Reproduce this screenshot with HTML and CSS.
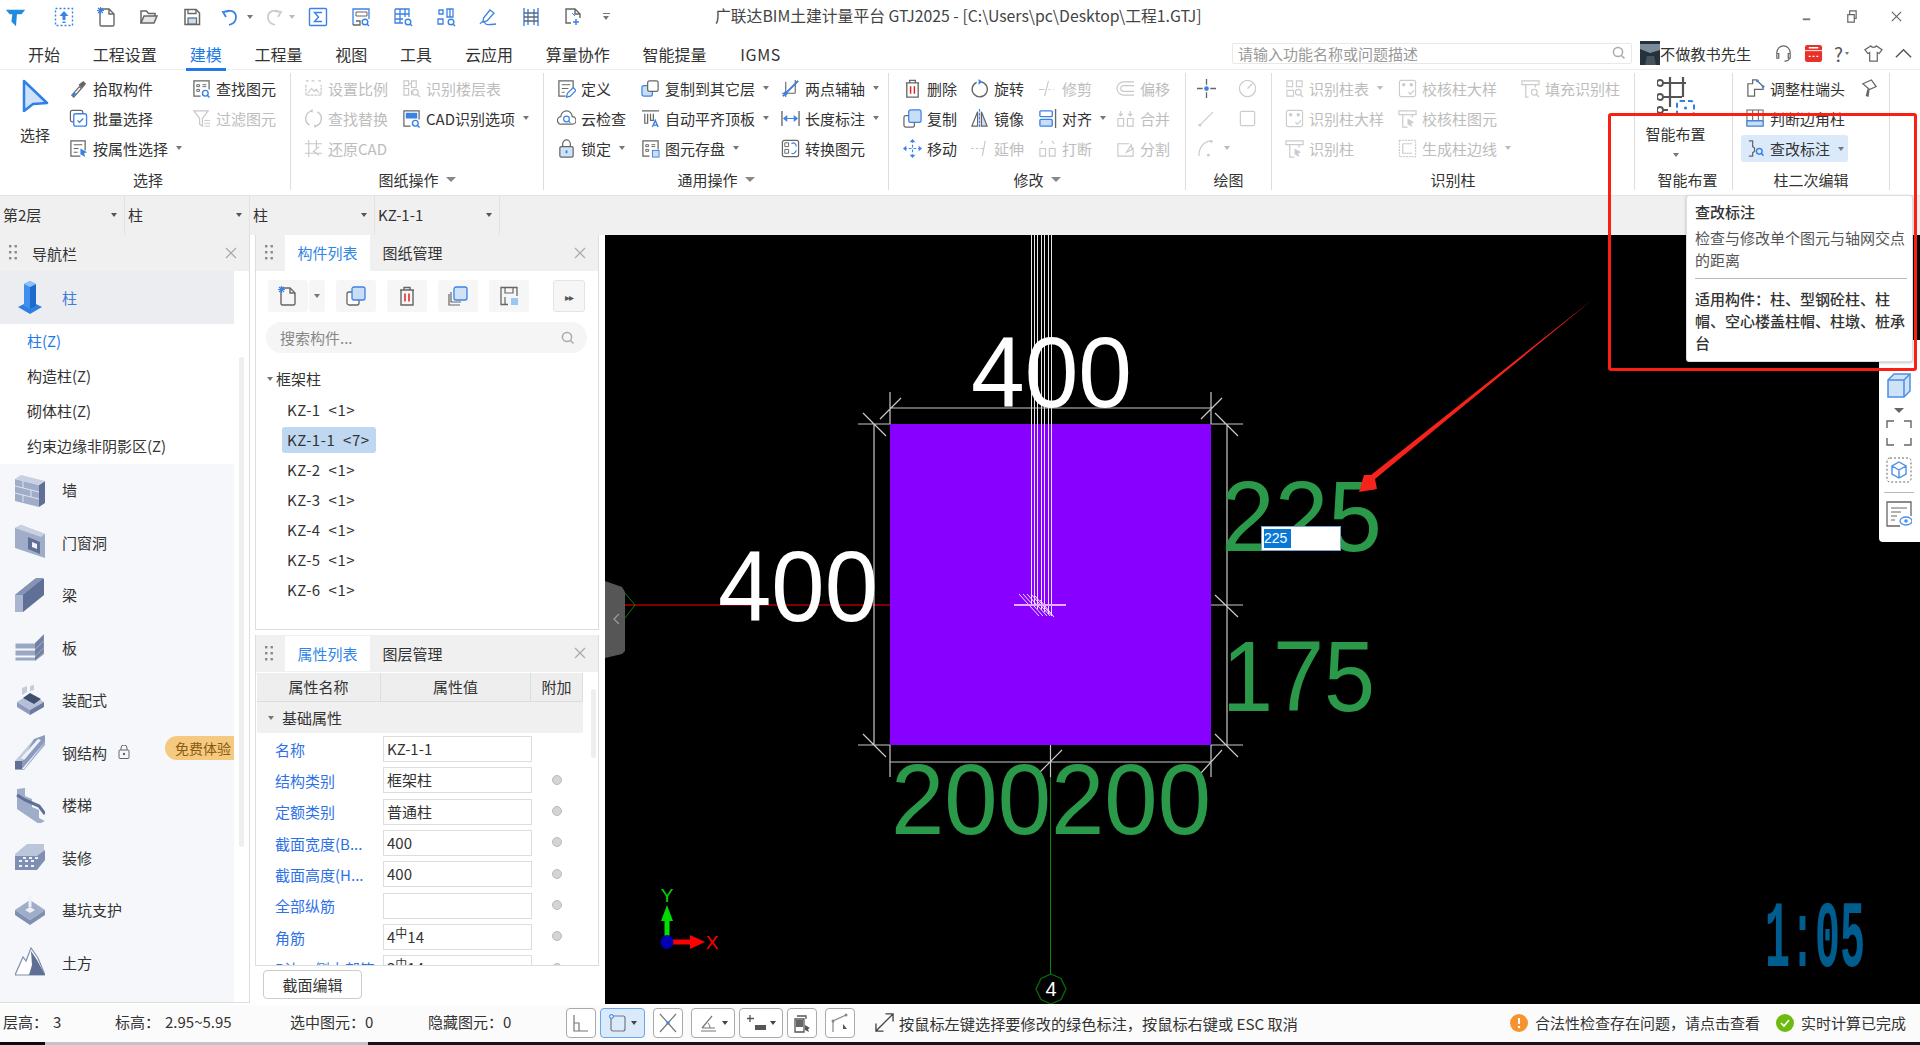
FILE: index.html
```html
<!DOCTYPE html>
<html lang="zh-CN">
<head>
<meta charset="utf-8">
<title>广联达BIM土建计量平台 GTJ2025</title>
<link rel="stylesheet" href="styles.css">
</head>
<body>
<svg class="defs" width="0" height="0" aria-hidden="true">
<defs>
<symbol id="grip" viewBox="0 0 8 16"><g fill="#888"><rect x="0" y="0" width="2.4" height="2.4"/><rect x="5.5" y="0" width="2.4" height="2.4"/><rect x="0" y="6" width="2.4" height="2.4"/><rect x="5.5" y="6" width="2.4" height="2.4"/><rect x="0" y="12" width="2.4" height="2.4"/><rect x="5.5" y="12" width="2.4" height="2.4"/></g></symbol>
<symbol id="x" viewBox="0 0 12 12"><path d="M1 1l10 10M11 1L1 11" stroke="#aaa" stroke-width="1.3" fill="none"/></symbol>
<symbol id="mag" viewBox="0 0 14 14"><circle cx="6" cy="6" r="4.6" fill="none" stroke="#aaa" stroke-width="1.5"/><path d="M9.5 9.5l3 3" stroke="#aaa" stroke-width="1.5"/></symbol>
<symbol id="newdoc" viewBox="0 0 20 20"><path d="M3 2h9l5 5v10.500a1.500 1.500 0 0 1-1.500 1.500h-11A1.500 1.500 0 0 1 3 17.500z" fill="none" stroke="var(--s)" stroke-width="1.400"/><path d="M12 2v5h5" fill="none" stroke="var(--s)" stroke-width="1.400"/><path d="M1 1l5 5M6 1L1 6M3.500 0v7M0 3.500h7" stroke="var(--a)" stroke-width="1.100"/></symbol>
<symbol id="upload" viewBox="0 0 20 20"><rect x="1.500" y="1.500" width="17" height="17" fill="none" stroke="var(--a)" stroke-width="1.400" stroke-dasharray="2 2"/><path d="M10 4l4.500 5h-3v4h-3V9h-3z" fill="var(--a)"/><rect x="8.500" y="14.500" width="3" height="1.500" fill="var(--a)"/></symbol>
<symbol id="folder" viewBox="0 0 20 20"><path d="M2 16V4h5.500l2 2.500H16V9" fill="none" stroke="var(--s)" stroke-width="1.500"/><path d="M2 16l3-7h13l-3 7z" fill="#e4e6ea" stroke="var(--s)" stroke-width="1.500"/></symbol>
<symbol id="save" viewBox="0 0 20 20"><path d="M3 2.500h11l3.500 3.500v11.500H3z" fill="none" stroke="var(--s)" stroke-width="1.500"/><path d="M6 3v3.500h8V3" fill="none" stroke="var(--s)" stroke-width="1.300"/><rect x="6" y="11" width="8.500" height="6" fill="#c9def6" stroke="var(--s)" stroke-width="1.200"/></symbol>
<symbol id="undo" viewBox="0 0 20 20"><path d="M5 10l-3-5 6-1M3 5c5-3 12-1 12 5 0 4-3 7-7 8" fill="none" stroke="var(--a)" stroke-width="1.800"/></symbol>
<symbol id="redo" viewBox="0 0 20 20"><path d="M15 10l3-5-6-1M17 5C12 2 5 4 5 10c0 4 3 7 7 8" fill="none" stroke="#ccc" stroke-width="1.800"/></symbol>
<symbol id="sigma" viewBox="0 0 20 20"><rect x="1.500" y="1.500" width="17" height="17" rx="1" fill="none" stroke="var(--a)" stroke-width="1.400"/><path d="M14 5.500H6.500L10.500 10l-4 4.500H14" fill="none" stroke="var(--a)" stroke-width="1.400"/></symbol>
<symbol id="q1" viewBox="0 0 20 20"><path d="M2 18V2h16v10" fill="none" stroke="var(--a)" stroke-width="1.300"/><path d="M5 5h11v4H5z" fill="none" stroke="var(--s)"/><path d="M2 18h7v-4H5" fill="none" stroke="var(--s)" stroke-width="1.300"/><circle cx="14" cy="15" r="2.800" fill="none" stroke="var(--a)" stroke-width="1.400"/><path d="M16 17l2 2" stroke="var(--a)" stroke-width="1.400"/></symbol>
<symbol id="q2" viewBox="0 0 20 20"><path d="M2 2h14v8M2 2v14h8M2 7h14M2 12h8M7 2v14M12 2v8" fill="none" stroke="var(--a)" stroke-width="1.300"/><circle cx="15" cy="15" r="2.800" fill="none" stroke="var(--a)" stroke-width="1.400"/><path d="M17 17l2 2" stroke="var(--a)" stroke-width="1.400"/></symbol>
<symbol id="q3" viewBox="0 0 20 20"><path d="M3 7V3h4v4zM11 10V2h6v8zM2 17v-5h5v5zM11 2h6M14 2v8" fill="none" stroke="var(--a)" stroke-width="1.300"/><circle cx="15" cy="15" r="2.800" fill="none" stroke="var(--a)" stroke-width="1.400"/><path d="M17 17l2 2" stroke="var(--a)" stroke-width="1.400"/></symbol>
<symbol id="q4" viewBox="0 0 20 20"><path d="M12 3l4 3-7 8-4 1 .5-4z" fill="none" stroke="var(--a)" stroke-width="1.300"/><path d="M2 17c2-3 4-3 5-1s3 2 11 1" fill="none" stroke="var(--a)" stroke-width="1.300"/></symbol>
<symbol id="q5" viewBox="0 0 20 20"><path d="M3 1v18M17 1v18M7 2v16M13 2v16" stroke="var(--a)" stroke-width="1.400" fill="none"/><path d="M3 6h14M3 14h14M3 10h14" stroke="var(--s)" stroke-width="1.300" fill="none"/></symbol>
<symbol id="q6" viewBox="0 0 20 20"><path d="M8 16H3V2h9l5 5v4M12 2v5h5" fill="none" stroke="var(--s)" stroke-width="1.400"/><path d="M5 18h0M13 12v6M10 15h6" stroke="var(--a)" stroke-width="1.500"/><path d="M9 6l3 3" stroke="var(--a)"/></symbol>
<symbol id="pick" viewBox="0 0 20 20"><path d="M3 17l8-9 2 2-8 9z" fill="#fff" stroke="var(--s)" stroke-width="1.300"/><path d="M3 17l3-3 1.500 1.500L5 19z" fill="var(--a)"/><path d="M10 6l5-4 3 3-4 5z" fill="var(--s)"/></symbol>
<symbol id="batch" viewBox="0 0 20 20"><rect x="1.500" y="1.500" width="13" height="12" rx="2" fill="none" stroke="var(--s)" stroke-width="1.300"/><rect x="5" y="5" width="13.500" height="13" rx="2" fill="#fff" stroke="var(--a)" stroke-width="1.400"/><path d="M9 12l2 2 4-4" fill="none" stroke="var(--a)" stroke-width="1.300"/></symbol>
<symbol id="prop" viewBox="0 0 20 20"><path d="M12 18H2V2h15v10" fill="none" stroke="var(--s)" stroke-width="1.300"/><path d="M5 6h9M5 10h5M5 14h4" stroke="var(--s)" stroke-width="1.200"/><path d="M12 10l7 4-3 1 1 4-5-3z" fill="var(--a)"/></symbol>
<symbol id="find" viewBox="0 0 20 20"><path d="M9 18H2V2h16v9" fill="none" stroke="var(--s)" stroke-width="1.300"/><path d="M5 6h3v2H5zM5 11h3v2H5zM11 6h4M11 8h4" stroke="var(--s)" fill="none"/><circle cx="14" cy="15" r="3" fill="none" stroke="var(--a)" stroke-width="1.500"/><path d="M16 17l2.500 2.500" stroke="var(--a)" stroke-width="1.500"/></symbol>
<symbol id="filter" viewBox="0 0 20 20"><path d="M2 2h15l-6 8v8l-3-2v-6z" fill="none" stroke="var(--s)" stroke-width="1.300"/><path d="M13 12h6M13 15h6M13 18h6" stroke="var(--s)"/></symbol>
<symbol id="scale" viewBox="0 0 20 20"><path d="M2 6v11h16V6M2 2h3M8 2h4M15 2h3" fill="none" stroke="var(--s)" stroke-width="1.300" stroke-dasharray="3 1"/><path d="M4 15l4-5 3 3 2-2 3 4" fill="none" stroke="var(--s)" stroke-width="1.200"/></symbol>
<symbol id="floor" viewBox="0 0 20 20"><path d="M2 2h5v5H2zM10 2h5v7h-5zM2 10h5v7H2zM10 12v5M2 7v3M7 5h3" fill="none" stroke="var(--s)" stroke-width="1.200"/><circle cx="14" cy="14" r="3" fill="none" stroke="var(--s)" stroke-width="1.300"/><path d="M16 16l3 3" stroke="var(--s)" stroke-width="1.300"/></symbol>
<symbol id="swap" viewBox="0 0 20 20"><path d="M9 2a8 8 0 0 0-3 15M11 18a8 8 0 0 0 3-15" fill="none" stroke="var(--s)" stroke-width="1.500"/><path d="M9 0v4l-3-2zM11 16v4l3-2z" fill="var(--s)"/></symbol>
<symbol id="cadq" viewBox="0 0 20 20"><path d="M9 18H2V2h16v9" fill="none" stroke="var(--s)" stroke-width="1.300"/><rect x="4" y="4" width="12" height="6" fill="var(--a)"/><circle cx="14" cy="15" r="3" fill="none" stroke="var(--a)" stroke-width="1.500"/><path d="M16 17l2.500 2.500" stroke="var(--a)" stroke-width="1.500"/></symbol>
<symbol id="restore" viewBox="0 0 20 20"><path d="M5 1v18M13 1v9M1 5h18M1 15h18" stroke="var(--s)" stroke-width="1.200" fill="none"/><path d="M16 8l-6 5 6 4" fill="none" stroke="var(--s)" stroke-width="1.300"/></symbol>
<symbol id="def" viewBox="0 0 20 20"><path d="M9 18H2V2h15v8" fill="none" stroke="var(--s)" stroke-width="1.300"/><path d="M5 6h9M5 10h7M5 14h3" stroke="var(--s)"/><path d="M10 19l1-4 6-6 3 3-6 6z" fill="none" stroke="var(--a)" stroke-width="1.300"/></symbol>
<symbol id="cloud" viewBox="0 0 20 20"><path d="M5 16a4 4 0 0 1-1-8 6 6 0 0 1 12 0 4 4 0 0 1 0 8z" fill="none" stroke="var(--s)" stroke-width="1.300"/><circle cx="10" cy="10.500" r="3" fill="none" stroke="var(--a)" stroke-width="1.300"/><path d="M12 12.500l2 2" stroke="var(--a)" stroke-width="1.300"/></symbol>
<symbol id="lock" viewBox="0 0 20 20"><rect x="3" y="8" width="14" height="11" rx="1.500" fill="#cfe2f8" stroke="var(--s)" stroke-width="1.300"/><path d="M6 8V5a4 4 0 0 1 8 0v3" fill="none" stroke="var(--s)" stroke-width="1.300"/><path d="M10 12v3" stroke="var(--a)" stroke-width="2"/></symbol>
<symbol id="copyto" viewBox="0 0 20 20"><rect x="1" y="7" width="11" height="11" rx="2" fill="#c9def6" stroke="var(--a)" stroke-width="1.300"/><rect x="7" y="2" width="11" height="11" rx="2" fill="#fff" stroke="var(--s)" stroke-width="1.300"/></symbol>
<symbol id="autotop" viewBox="0 0 20 20"><path d="M1 2h18M4 5v10h3V5M10 5v7h3V5" fill="none" stroke="var(--s)" stroke-width="1.300"/><path d="M12 19l3-7 3 7M13 17h4" fill="none" stroke="var(--a)" stroke-width="1.500"/></symbol>
<symbol id="store" viewBox="0 0 20 20"><path d="M9 18H2V2h16v9" fill="none" stroke="var(--s)" stroke-width="1.300"/><path d="M5 6h3v2H5zM5 11h3v2H5zM11 6h4M11 8h4" stroke="var(--s)" fill="none"/><rect x="12" y="12" width="7" height="7" fill="#c9def6" stroke="var(--a)"/></symbol>
<symbol id="twopt" viewBox="0 0 20 20"><path d="M5 3v16M1 15h14M15 1v14M2 18L18 2" fill="none" stroke="var(--s)" stroke-width="1.200"/><path d="M2 18L18 2" stroke="var(--a)" stroke-width="2"/><circle cx="5" cy="15" r="2" fill="var(--a)"/></symbol>
<symbol id="length" viewBox="0 0 20 20"><path d="M1 2v16M19 2v16" stroke="var(--s)" stroke-width="1.400"/><path d="M3 10h14M3 10l3-2.500v5zM17 10l-3-2.500v5z" stroke="var(--a)" fill="var(--a)" stroke-width="1.200"/></symbol>
<symbol id="convert" viewBox="0 0 20 20"><rect x="1.500" y="1.500" width="17" height="17" rx="2" fill="none" stroke="var(--s)" stroke-width="1.300"/><path d="M4 4h4v4H4zM4 11h4v4H4z" fill="none" stroke="var(--s)"/><path d="M11 5c3-2 5 0 5 3M16 12c-1 3-3 4-5 3" fill="none" stroke="var(--a)" stroke-width="1.300"/></symbol>
<symbol id="del" viewBox="0 0 20 20"><path d="M3 4h14M7 4V1.500h6V4M4 4v15h12V4" fill="none" stroke="var(--s)" stroke-width="1.400"/><path d="M8 7.500v8M12 7.500v8" stroke="#e02020" stroke-width="1.500"/></symbol>
<symbol id="rotate" viewBox="0 0 20 20"><path d="M12 3a8 8 0 1 1-5 .5" fill="none" stroke="var(--s)" stroke-width="1.500"/><path d="M9 0l4 3-4 3z" fill="var(--a)"/></symbol>
<symbol id="trim" viewBox="0 0 20 20"><path d="M1 11h6M11 11h2M16 11h1M11 2L7 18" stroke="var(--s)" stroke-width="1.200" fill="none"/></symbol>
<symbol id="offset" viewBox="0 0 20 20"><path d="M19 3H8a7 7 0 0 0 0 14h11M19 7H8a3 3 0 0 0 0 6h11" fill="none" stroke="var(--s)" stroke-width="1.200"/></symbol>
<symbol id="copy" viewBox="0 0 20 20"><rect x="1" y="7" width="11" height="12" rx="2" fill="#fff" stroke="var(--s)" stroke-width="1.300"/><rect x="6" y="1" width="13" height="13" rx="2" fill="#c9def6" stroke="var(--a)" stroke-width="1.300"/></symbol>
<symbol id="mirror" viewBox="0 0 20 20"><path d="M8 3L2 18h6z" fill="none" stroke="var(--s)" stroke-width="1.300"/><path d="M12 3l6 15h-6z" fill="#c9def6" stroke="var(--s)" stroke-width="1.300"/><path d="M10 0v20" stroke="var(--a)" stroke-width="1.200" stroke-dasharray="3 1"/></symbol>
<symbol id="align" viewBox="0 0 20 20"><rect x="2" y="2" width="13" height="6" rx="1" fill="none" stroke="var(--a)" stroke-width="1.400"/><rect x="2" y="11" width="13" height="7" rx="1" fill="#c9def6" stroke="var(--a)" stroke-width="1.400"/><path d="M18.500 0v20" stroke="var(--s)" stroke-width="1.400"/></symbol>
<symbol id="merge" viewBox="0 0 20 20"><path d="M2 10h6v8H2zM12 10h6v8h-6zM5 2v4M3 5l2 2 2-2M15 2v4M13 5l2 2 2-2" fill="none" stroke="var(--s)" stroke-width="1.200"/></symbol>
<symbol id="move" viewBox="0 0 20 20"><path d="M10 1v18M1 10h18" stroke="var(--a)" stroke-width="1.200" stroke-dasharray="3 2"/><path d="M10 0l3 3.500H7zM10 20l3-3.500H7zM0 10l3.500-3v6zM20 10l-3.500-3v6z" fill="var(--a)"/></symbol>
<symbol id="extend" viewBox="0 0 20 20"><path d="M1 10h3M6 10h3M11 10h4M16 2l-3 16" stroke="var(--s)" stroke-width="1.200" fill="none"/></symbol>
<symbol id="break" viewBox="0 0 20 20"><path d="M2 10h6v8H2zM12 10h6v8h-6zM5 2l-2 3M15 2l2 3" fill="none" stroke="var(--s)" stroke-width="1.200"/></symbol>
<symbol id="split" viewBox="0 0 20 20"><path d="M14 5H2v13h16V9M11 14l5-8 1 5z" fill="none" stroke="var(--s)" stroke-width="1.200"/></symbol>
<symbol id="point" viewBox="0 0 20 20"><path d="M10 0v6M10 14v6M0 10h6M14 10h6" stroke="var(--s)" stroke-width="1.400"/><circle cx="10" cy="10" r="2.500" fill="var(--a)"/></symbol>
<symbol id="clock" viewBox="0 0 20 20"><circle cx="10" cy="10" r="8.500" fill="none" stroke="#ccc" stroke-width="1.300"/><path d="M10 10l5-5" stroke="#ccc" stroke-width="1.300"/></symbol>
<symbol id="line" viewBox="0 0 20 20"><path d="M3 17L17 3" stroke="#ccc" stroke-width="1.300"/><circle cx="3" cy="17" r="1.500" fill="#ccc"/></symbol>
<symbol id="rect" viewBox="0 0 20 20"><rect x="2.500" y="2.500" width="15" height="15" rx="1.500" fill="none" stroke="#ccc" stroke-width="1.300"/></symbol>
<symbol id="arc" viewBox="0 0 20 20"><path d="M2 18C2 9 7 3 14 2" fill="none" stroke="#ccc" stroke-width="1.300"/><circle cx="15" cy="2.500" r="1.500" fill="#ccc"/><circle cx="12" cy="17" r="1.500" fill="#ccc"/></symbol>
<symbol id="tbl" viewBox="0 0 20 20"><path d="M2 2h6v6H2zM12 2h6v6h-6zM2 12h7v6H2z" fill="none" stroke="#ccc" stroke-width="1.200"/><circle cx="14" cy="14" r="3" fill="none" stroke="#ccc" stroke-width="1.300"/><path d="M16 16l3 3" stroke="#ccc" stroke-width="1.300"/></symbol>
<symbol id="chk" viewBox="0 0 20 20"><rect x="1.500" y="1.500" width="17" height="17" rx="2" fill="none" stroke="#ccc" stroke-width="1.200"/><circle cx="6" cy="6" r="1.800" fill="#ccc"/><circle cx="14" cy="6" r="1.800" fill="#ccc"/><path d="M11 14l2 2 4-4" fill="none" stroke="#ccc" stroke-width="1.300"/></symbol>
<symbol id="fill" viewBox="0 0 20 20"><path d="M1 2h18v4H1zM5 6v13h3M15 6v3" fill="none" stroke="#ccc" stroke-width="1.300"/><circle cx="14" cy="14" r="3" fill="none" stroke="#ccc" stroke-width="1.300"/><path d="M16 16l3 3" stroke="#ccc" stroke-width="1.300"/></symbol>
<symbol id="cap" viewBox="0 0 20 20"><path d="M1 2h18v4H1zM5 6v13h5M15 6v3" fill="none" stroke="#ccc" stroke-width="1.300"/><path d="M10 10l7 4-3 1 1 4-5-3z" fill="#ccc"/></symbol>
<symbol id="gen" viewBox="0 0 20 20"><rect x="1.500" y="1.500" width="17" height="17" fill="none" stroke="#ccc" stroke-width="1.300" stroke-dasharray="2 1"/><path d="M5 5h10M5 5v10h10" fill="none" stroke="#ccc" stroke-width="1.300"/></symbol>
<symbol id="end" viewBox="0 0 20 20"><path d="M2 18V5h5V1h4l7 7v3H9v7z" fill="none" stroke="var(--s)" stroke-width="1.300"/><circle cx="12" cy="2" r="1.500" fill="var(--a)"/><circle cx="18" cy="8" r="1.500" fill="var(--a)"/></symbol>
<symbol id="brush" viewBox="0 0 20 20"><path d="M3 5l9-4 5 7-7 3z" fill="none" stroke="var(--s)" stroke-width="1.300"/><path d="M8 10l2 2-1 7-3-1z" fill="var(--s)"/></symbol>
<symbol id="corner" viewBox="0 0 20 20"><path d="M1 1h17v17H1zM1 6.500h17M1 12.500h17M7 1v17M13 1v17" fill="none" stroke="var(--s)" stroke-width="1.100"/><path d="M1 12.500h17V18H1z" fill="#c9def6" stroke="var(--a)" stroke-width="1.100"/></symbol>
<symbol id="mark" viewBox="0 0 20 20"><path d="M3 2h4v6l2 1.500V13l-2 1.500V18H3" fill="none" stroke="var(--s)" stroke-width="1.300"/><circle cx="14" cy="13" r="3" fill="none" stroke="var(--a)" stroke-width="1.500"/><path d="M16 15l2.500 2.500" stroke="var(--a)" stroke-width="1.500"/></symbol>
<symbol id="navcol" viewBox="0 0 30 36"><path d="M3 28l12-6 12 6-12 7z" fill="#2f7fe0"/><path d="M9 5l6-3 6 3v22l-6 3-6-3z" fill="#3f8ff0"/><path d="M15 8v22l6-3V5z" fill="#1f6ac8"/><path d="M9 5l6-3 6 3-6 3z" fill="#8fc0f8"/></symbol>
<symbol id="navwall" viewBox="0 0 30 36"><path d="M0 7l24 6v22L0 29z" fill="#a0adc8"/><path d="M24 13l6-4v22l-6 4z" fill="#5f6f95"/><path d="M0 7l6-4 24 6-6 4z" fill="#c8d0e2"/><path d="M0 14l24 6M0 21l24 6M8 9v7M16 18v7M8 23v7" stroke="#dde2ee" fill="none"/></symbol>
<symbol id="navdoor" viewBox="0 0 30 36"><path d="M0 4l6-3 24 9v24L0 24z" fill="#a0adc8"/><path d="M6 1l24 9-4 3L0 4z" fill="#c8d0e2"/><path d="M13 13l12 5v12l-12-5z" fill="#5f6f95"/><path d="M17 18l5 2v5l-5-2z" fill="#eef1f6"/></symbol>
<symbol id="navbeam" viewBox="0 0 30 36"><path d="M0 18L20 2h9v16L8 35H0z" fill="#5f6f95"/><path d="M0 18h8v17H0z" fill="#aab6cf"/><path d="M0 18L21 1h8L8 18z" fill="#8494b5"/></symbol>
<symbol id="navslab" viewBox="0 0 30 30"><path d="M0 11h20l9-9v6l-9 9H0zM0 18h20l9-9v6l-9 9H0zM0 25h20l9-9v4l-9 9H0z" fill="#9aa8c4" stroke="#f5f7fa"/><path d="M20 11l9-9v20l-9 7z" fill="#5f6f95" opacity=".7"/></symbol>
<symbol id="navpre" viewBox="0 0 30 30"><path d="M2 17l13-8 14 8-14 8z" fill="#b5c0d6"/><path d="M2 17v5l13 8v-5z" fill="#8c9bbd"/><path d="M15 25v5l14-8v-5z" fill="#6a7a9e"/><path d="M8 13l7-5 11 6-7 5z" fill="#404e70"/><path d="M7 10V3l5-2v6zM15 6V1l4-1v5z" fill="#c3cbdc"/></symbol>
<symbol id="navsteel" viewBox="0 0 30 36"><path d="M0 27L19 5h7L7 27z" fill="#c3cbdc"/><path d="M7 27v8H0v-8z" fill="#5f6f95"/><path d="M7 35L30 8V1L19 5 7 27z" fill="#8c9bbd"/><path d="M6 24L23 5l3 1-17 20z" fill="#eef1f6"/><path d="M0 35h9l21-27v3L9 36H0z" fill="#a0adc8"/></symbol>
<symbol id="navstair" viewBox="0 0 30 36"><path d="M2 2l8-1v8l7 3v8l7 3v8l6 3-6 3L2 22z" fill="#a0adc8"/><path d="M2 8l8 5 7 3 7 3 6 8" fill="none" stroke="#5f6f95" stroke-width="3"/></symbol>
<symbol id="navdeco" viewBox="0 0 30 30"><path d="M0 12L12 2h17v18H0z" fill="#bcc6da"/><path d="M0 14h22l8-6v10l-8 10H0z" fill="#7f8fb2"/><path d="M4 19h3M10 19h3M16 19h3M4 24h3M10 24h3M16 24h3M8 16h3M14 16h3M20 16h3" stroke="#eef1f6" stroke-width="2"/></symbol>
<symbol id="navpit" viewBox="0 0 30 30"><path d="M0 15L15 5l15 10-15 10z" fill="#a0adc8"/><path d="M0 15v5l15 10v-5zM30 15v5L15 30v-5z" fill="#7f8fb2"/><path d="M10 15l5-3 5 3-5 3z" fill="#eef1f6"/><path d="M15 1v11" stroke="#eef1f6" stroke-width="3"/></symbol>
<symbol id="navearth" viewBox="0 0 30 30"><path d="M0 28L8 10l3 4 5-13 7 10 7 17z" fill="#fff" stroke="#7f8fb2" stroke-width="1.200"/><path d="M16 4l6 9 8 15H14l3-10z" fill="#5f6f95"/></symbol>
<symbol id="tbcopy" viewBox="0 0 20 20"><rect x="1" y="6" width="12" height="13" rx="2" fill="#fff" stroke="#666" stroke-width="1.300"/><rect x="6" y="1" width="13" height="13" rx="2" fill="#c9def6" stroke="#3b82e6" stroke-width="1.300"/></symbol>
<symbol id="tbmulti" viewBox="0 0 20 20"><path d="M1 8v11h11M3 6v10h10" fill="none" stroke="#666" stroke-width="1.200"/><rect x="6" y="1" width="13" height="13" rx="2" fill="#cfe2f8" stroke="#3b82e6" stroke-width="1.300"/></symbol>
<symbol id="tbsave" viewBox="0 0 20 20"><path d="M9 18.500H2v-17h16V10" fill="none" stroke="#666" stroke-width="1.300"/><path d="M6 2v5h8V2M6 18V11" fill="none" stroke="#666" stroke-width="1.200"/><rect x="12" y="12" width="7" height="7" fill="#9cc6f5"/></symbol>
<symbol id="st1" viewBox="0 0 20 20"><path d="M3 2v16h14M3 10h5v8" fill="none" stroke="#777" stroke-width="1.200"/></symbol>
<symbol id="st2" viewBox="0 0 20 20"><rect x="3" y="3" width="14" height="15" rx="2" fill="none" stroke="#777" stroke-width="1.200"/><circle cx="3.500" cy="3.500" r="2" fill="#cfe2f8" stroke="#3b82e6"/></symbol>
<symbol id="st3" viewBox="0 0 20 20"><path d="M2 1l16 18M18 1L2 19" stroke="#777" stroke-width="1.200"/><rect x="8.500" y="8.500" width="3" height="3" fill="#3b82e6"/></symbol>
<symbol id="st4" viewBox="0 0 20 20"><path d="M3 15L13 3M3 15h13M2 18h15" stroke="#777" fill="none" stroke-width="1.200"/><path d="M9 10a7 7 0 0 1 2 5" stroke="#777" fill="none"/></symbol>
<symbol id="st5" viewBox="0 0 20 20"><path d="M3 2v7M0 5.500h7" stroke="#555" stroke-width="1.300"/><rect x="8" y="12" width="11" height="5" fill="#555"/></symbol>
<symbol id="st6" viewBox="0 0 20 20"><path d="M5 3h9v3M3 6h9v13H3z" fill="none" stroke="#555" stroke-width="1.300"/><rect x="4" y="7" width="7" height="7" fill="#666"/><path d="M13 12l5 3-2 1 1 3-4-2z" fill="#555"/></symbol>
<symbol id="st7" viewBox="0 0 20 20"><path d="M3 19V8l13-6" fill="none" stroke="#888" stroke-width="1.200"/><circle cx="3" cy="8" r="1.500" fill="#888"/><circle cx="16" cy="2" r="1.500" fill="#888"/><path d="M13 11l4 5h-4z" fill="#555"/></symbol>
</defs>
</svg>

<div class="app">
  <header class="titlebar">
    <div class="qat">
      <svg class="logo" viewBox="0 0 24 24"><path d="M1 4h21l-4 5h-5l-1 13-5-5 1-8H5z" fill="#1f8ae0"/></svg>
      <svg class="qi"><use href="#upload"/></svg>
      <svg class="qi"><use href="#newdoc"/></svg>
      <svg class="qi"><use href="#folder"/></svg>
      <svg class="qi"><use href="#save"/></svg>
      <span class="qsplit"><svg class="qi"><use href="#undo"/></svg><i class="car"></i></span>
      <span class="qsplit"><svg class="qi"><use href="#redo"/></svg><i class="car light"></i></span>
      <svg class="qi"><use href="#sigma"/></svg>
      <svg class="qi"><use href="#q1"/></svg>
      <svg class="qi"><use href="#q2"/></svg>
      <svg class="qi"><use href="#q3"/></svg>
      <svg class="qi"><use href="#q4"/></svg>
      <svg class="qi"><use href="#q5"/></svg>
      <svg class="qi"><use href="#q6"/></svg>
      <span class="qmore"><i class="bar"></i><i class="car"></i></span>
    </div>
    <div class="wintitle">广联达BIM土建计量平台 GTJ2025 - [C:\Users\pc\Desktop\工程1.GTJ]</div>
    <div class="winctl">
      <svg class="wc" viewBox="0 0 14 14"><rect x="3" y="9" width="8" height="2" fill="#777"/></svg>
      <svg class="wc" viewBox="0 0 14 14"><path d="M3 5h7v8H3zM5 5V1h7v8h-2" fill="none" stroke="#666" stroke-width="1.300"/></svg>
      <svg class="wc" viewBox="0 0 14 14"><path d="M2 2l10 10M12 2L2 12" stroke="#666" stroke-width="1.300"/></svg>
    </div>
  </header>

  <nav class="tabs">
    <span class="tab">开始</span><span class="tab">工程设置</span><span class="tab on">建模</span><span class="tab">工程量</span><span class="tab">视图</span><span class="tab">工具</span><span class="tab">云应用</span><span class="tab">算量协作</span><span class="tab">智能提量</span><span class="tab igms">IGMS</span>
    <div class="tabright">
      <div class="finder"><span>请输入功能名称或问题描述</span><svg class="mag"><use href="#mag"/></svg></div>
      <div class="user"><svg class="avatar" viewBox="0 0 20 24"><rect width="20" height="24" fill="#25323c"/><path d="M0 3h20v6L10 12 0 8z" fill="#7c8b99"/><path d="M5 24l2-9h7l2 9z" fill="#46525c"/></svg><span>不做教书先生</span></div>
      <svg class="ti" viewBox="0 0 20 20"><path d="M3 12V9a7 7 0 0 1 14 0v3M3 10h2v5H3zM15 10h2v5h-2zM16 15c0 2-2 3-5 3" fill="none" stroke="#666" stroke-width="1.300"/></svg>
      <svg class="ti red" viewBox="0 0 20 20"><rect x="1" y="1" width="18" height="18" rx="2.500" fill="#e8312a"/><path d="M1 7h18" stroke="#fff"/><path d="M5 4h10M5 13h2M9 13h2M13 13h2" stroke="#fff" stroke-width="1.500"/></svg>
      <span class="help">?<i class="car"></i></span>
      <svg class="ti" viewBox="0 0 20 20"><path d="M7 2L1 6l3 4 2-1v9h8V9l2 1 3-4-6-4c-1 2-5 2-6 0z" fill="none" stroke="#666" stroke-width="1.300"/></svg>
      <svg class="ti" viewBox="0 0 20 20"><path d="M2 14l8-8 8 8" fill="none" stroke="#555" stroke-width="1.500"/></svg>
    </div>
  </nav>

  <section class="ribbon">
    <div class="grp g1">
      <div class="cols">
        <div class="big bigsel"><svg class="bigarrow" viewBox="0 0 27 33"><path d="M2 2l23 22-14 1-9 7z" fill="#cfe2f8" stroke="#2f80ed" stroke-width="2.500" stroke-linejoin="round"/></svg><span>选择</span></div>
        <div class="col">
          <div class="ri"><svg class="ic"><use href="#pick"/></svg>拾取构件</div>
          <div class="ri"><svg class="ic"><use href="#batch"/></svg>批量选择</div>
          <div class="ri"><svg class="ic"><use href="#prop"/></svg>按属性选择<i class="car"></i></div>
        </div>
        <div class="col">
          <div class="ri"><svg class="ic"><use href="#find"/></svg>查找图元</div>
          <div class="ri off"><svg class="ic"><use href="#filter"/></svg>过滤图元</div>
        </div>
      </div>
      <div class="glabel">选择</div>
    </div>
    <div class="grp g2">
      <div class="cols">
        <div class="col">
          <div class="ri off"><svg class="ic"><use href="#scale"/></svg>设置比例</div>
          <div class="ri off"><svg class="ic"><use href="#swap"/></svg>查找替换</div>
          <div class="ri off"><svg class="ic"><use href="#restore"/></svg>还原CAD</div>
        </div>
        <div class="col">
          <div class="ri off"><svg class="ic"><use href="#floor"/></svg>识别楼层表</div>
          <div class="ri"><svg class="ic"><use href="#cadq"/></svg>CAD识别选项<i class="car"></i></div>
        </div>
      </div>
      <div class="glabel">图纸操作<i class="car gc"></i></div>
    </div>
    <div class="grp g3">
      <div class="cols">
        <div class="col">
          <div class="ri"><svg class="ic"><use href="#def"/></svg>定义</div>
          <div class="ri"><svg class="ic"><use href="#cloud"/></svg>云检查</div>
          <div class="ri"><svg class="ic"><use href="#lock"/></svg>锁定<i class="car"></i></div>
        </div>
        <div class="col">
          <div class="ri"><svg class="ic"><use href="#copyto"/></svg>复制到其它层<i class="car"></i></div>
          <div class="ri"><svg class="ic"><use href="#autotop"/></svg>自动平齐顶板<i class="car"></i></div>
          <div class="ri"><svg class="ic"><use href="#store"/></svg>图元存盘<i class="car"></i></div>
        </div>
        <div class="col">
          <div class="ri"><svg class="ic"><use href="#twopt"/></svg>两点辅轴<i class="car"></i></div>
          <div class="ri"><svg class="ic"><use href="#length"/></svg>长度标注<i class="car"></i></div>
          <div class="ri"><svg class="ic"><use href="#convert"/></svg>转换图元</div>
        </div>
      </div>
      <div class="glabel">通用操作<i class="car gc"></i></div>
    </div>
    <div class="grp g4">
      <div class="cols">
        <div class="col">
          <div class="ri"><svg class="ic"><use href="#del"/></svg>删除</div>
          <div class="ri"><svg class="ic"><use href="#copy"/></svg>复制</div>
          <div class="ri"><svg class="ic"><use href="#move"/></svg>移动</div>
        </div>
        <div class="col">
          <div class="ri"><svg class="ic"><use href="#rotate"/></svg>旋转</div>
          <div class="ri"><svg class="ic"><use href="#mirror"/></svg>镜像</div>
          <div class="ri off"><svg class="ic"><use href="#extend"/></svg>延伸</div>
        </div>
        <div class="col">
          <div class="ri off"><svg class="ic"><use href="#trim"/></svg>修剪</div>
          <div class="ri"><svg class="ic"><use href="#align"/></svg>对齐<i class="car"></i></div>
          <div class="ri off"><svg class="ic"><use href="#break"/></svg>打断</div>
        </div>
        <div class="col">
          <div class="ri off"><svg class="ic"><use href="#offset"/></svg>偏移</div>
          <div class="ri off"><svg class="ic"><use href="#merge"/></svg>合并</div>
          <div class="ri off"><svg class="ic"><use href="#split"/></svg>分割</div>
        </div>
      </div>
      <div class="glabel">修改<i class="car gc"></i></div>
    </div>
    <div class="grp g5">
      <div class="cols">
        <div class="col">
          <div class="ri"><svg class="ic"><use href="#point"/></svg></div>
          <div class="ri"><svg class="ic"><use href="#line"/></svg></div>
          <div class="ri"><svg class="ic"><use href="#arc"/></svg><i class="car light"></i></div>
        </div>
        <div class="col">
          <div class="ri"><svg class="ic"><use href="#clock"/></svg></div>
          <div class="ri"><svg class="ic"><use href="#rect"/></svg></div>
        </div>
      </div>
      <div class="glabel">绘图</div>
    </div>
    <div class="grp g6">
      <div class="cols">
        <div class="col">
          <div class="ri off"><svg class="ic"><use href="#tbl"/></svg>识别柱表<i class="car light"></i></div>
          <div class="ri off"><svg class="ic"><use href="#chk"/></svg>识别柱大样</div>
          <div class="ri off"><svg class="ic"><use href="#cap"/></svg>识别柱</div>
        </div>
        <div class="col">
          <div class="ri off"><svg class="ic"><use href="#chk"/></svg>校核柱大样</div>
          <div class="ri off"><svg class="ic"><use href="#cap"/></svg>校核柱图元</div>
          <div class="ri off"><svg class="ic"><use href="#gen"/></svg>生成柱边线<i class="car light"></i></div>
        </div>
        <div class="col">
          <div class="ri off"><svg class="ic"><use href="#fill"/></svg>填充识别柱</div>
        </div>
      </div>
      <div class="glabel">识别柱</div>
    </div>
    <div class="grp g7">
      <div class="cols">
        <div class="big smart">
          <svg class="bigsmart" viewBox="0 0 38 38"><path d="M1 6h28M1 20h24M1 33h10M13 0v30M26 0v20" fill="none" stroke="#555" stroke-width="2.200"/><circle cx="3" cy="6" r="3" fill="#fff" stroke="#555" stroke-width="1.800"/><circle cx="3" cy="20" r="3" fill="#fff" stroke="#555" stroke-width="1.800"/><circle cx="3" cy="33" r="3" fill="#fff" stroke="#555" stroke-width="1.800"/><rect x="20" y="24" width="17" height="14" rx="3" fill="#fff" stroke="#2f80ed" stroke-width="2" stroke-dasharray="5 3"/><circle cx="28.500" cy="31" r="1.600" fill="#2f80ed"/></svg>
          <span>智能布置</span><i class="car"></i>
        </div>
      </div>
      <div class="glabel">智能布置</div>
    </div>
    <div class="grp g8">
      <div class="cols">
        <div class="col">
          <div class="ri"><svg class="ic"><use href="#end"/></svg>调整柱端头<svg class="ic extra"><use href="#brush"/></svg></div>
          <div class="ri"><svg class="ic"><use href="#corner"/></svg>判断边角柱</div>
          <div class="ri hot"><svg class="ic"><use href="#mark"/></svg>查改标注<i class="car"></i></div>
        </div>
      </div>
      <div class="glabel">柱二次编辑</div>
    </div>
  </section>

  <div class="selbar">
    <div class="sel">第2层<i class="car"></i></div>
    <div class="sel">柱<i class="car"></i></div>
    <div class="sel">柱<i class="car"></i></div>
    <div class="sel">KZ-1-1<i class="car"></i></div>
  </div>

  <main class="work">
    <aside class="navpane">
      <div class="phead"><svg class="grip"><use href="#grip"/></svg><span class="ptitle">导航栏</span><svg class="pclose"><use href="#x"/></svg></div>
      <div class="navlist">
        <div class="nv active"><svg class="nvi"><use href="#navcol"/></svg><span>柱</span></div>
        <div class="subs">
          <div class="sub on">柱(Z)</div>
          <div class="sub">构造柱(Z)</div>
          <div class="sub">砌体柱(Z)</div>
          <div class="sub">约束边缘非阴影区(Z)</div>
        </div>
        <div class="nv"><svg class="nvi"><use href="#navwall"/></svg><span>墙</span></div>
        <div class="nv"><svg class="nvi"><use href="#navdoor"/></svg><span>门窗洞</span></div>
        <div class="nv"><svg class="nvi"><use href="#navbeam"/></svg><span>梁</span></div>
        <div class="nv"><svg class="nvi"><use href="#navslab"/></svg><span>板</span></div>
        <div class="nv"><svg class="nvi"><use href="#navpre"/></svg><span>装配式</span></div>
        <div class="nv"><svg class="nvi"><use href="#navsteel"/></svg><span>钢结构</span>
          <svg class="nlock" viewBox="0 0 12 14"><rect x="1" y="5" width="10" height="8.500" rx="1" fill="none" stroke="#666"/><path d="M3 5V3a3 3 0 0 1 6 0v2" fill="none" stroke="#666"/><circle cx="6" cy="9" r="1.200" fill="#666"/></svg>
          <b class="badge">免费体验</b></div>
        <div class="nv"><svg class="nvi"><use href="#navstair"/></svg><span>楼梯</span></div>
        <div class="nv"><svg class="nvi"><use href="#navdeco"/></svg><span>装修</span></div>
        <div class="nv"><svg class="nvi"><use href="#navpit"/></svg><span>基坑支护</span></div>
        <div class="nv"><svg class="nvi"><use href="#navearth"/></svg><span>土方</span></div>
      </div>
      <i class="navthumb"></i>
    </aside>

    <div class="midcol">
      <section class="panel plist">
        <div class="phead"><svg class="grip"><use href="#grip"/></svg><span class="ptab on">构件列表</span><span class="ptab">图纸管理</span><svg class="pclose"><use href="#x"/></svg></div>
        <div class="tools">
          <span class="tb first"><svg class="tbi"><use href="#newdoc"/></svg></span><span class="tb drop"><i class="car"></i></span>
          <span class="tb"><svg class="tbi"><use href="#tbcopy"/></svg></span>
          <span class="tb"><svg class="tbi"><use href="#del"/></svg></span>
          <span class="tb"><svg class="tbi"><use href="#tbmulti"/></svg></span>
          <span class="tb"><svg class="tbi"><use href="#tbsave"/></svg></span>
          <span class="tb more">▸▸</span>
        </div>
        <div class="psearch"><span>搜索构件...</span><svg class="mag"><use href="#mag"/></svg></div>
        <div class="tree">
          <div class="tnode"><i class="car"></i>框架柱</div>
          <div class="tleaf">KZ-1 &lt;1&gt;</div>
          <div class="tleaf sel-leaf">KZ-1-1 &lt;7&gt;</div>
          <div class="tleaf">KZ-2 &lt;1&gt;</div>
          <div class="tleaf">KZ-3 &lt;1&gt;</div>
          <div class="tleaf">KZ-4 &lt;1&gt;</div>
          <div class="tleaf">KZ-5 &lt;1&gt;</div>
          <div class="tleaf">KZ-6 &lt;1&gt;</div>
        </div>
      </section>
      <section class="panel pprop">
        <div class="phead short"><svg class="grip"><use href="#grip"/></svg><span class="ptab on">属性列表</span><span class="ptab">图层管理</span><svg class="pclose"><use href="#x"/></svg></div>
        <div class="ptable">
          <div class="thead"><span>属性名称</span><span>属性值</span><span>附加</span></div>
          <div class="tsec"><i class="car"></i>基础属性</div>
          <div class="trow"><label>名称</label><span class="val">KZ-1-1</span></div>
          <div class="trow"><label>结构类别</label><span class="val">框架柱</span><i class="dot"></i></div>
          <div class="trow"><label>定额类别</label><span class="val">普通柱</span><i class="dot"></i></div>
          <div class="trow"><label>截面宽度(B...</label><span class="val">400</span><i class="dot"></i></div>
          <div class="trow"><label>截面高度(H...</label><span class="val">400</span><i class="dot"></i></div>
          <div class="trow"><label>全部纵筋</label><span class="val"></span><i class="dot"></i></div>
          <div class="trow"><label>角筋</label><span class="val">4<sup>中</sup>14</span><i class="dot"></i></div>
          <div class="trow"><label>B边一侧中部筋</label><span class="val">3<sup>中</sup>14</span><i class="dot"></i></div>
          <i class="pthumb"></i>
        </div>
      </section>
      <div class="pfoot"><button class="secbtn">截面编辑</button></div>
    </div>

    <div class="canvas">
      <svg class="draw" viewBox="605 235 1315 769">
        <rect x="890" y="424" width="321" height="321" fill="#8800ff"/>
        <path d="M625 605H890" stroke="#800000" stroke-width="2"/>
        <path d="M625 593l10 12-10 13" fill="none" stroke="#0a7a0a"/>
        <path d="M1050.500 745V974" stroke="#0a8a0a"/>
        <g stroke="#fff" stroke-width="1" fill="none" opacity=".9">
          <path d="M1031.500 235V605M1034.500 235V607M1037.500 235V609M1041.500 235V610M1044.500 235V612M1048.500 235V614M1051.500 235V616"/>
          <path d="M1019 594l20 22M1023 594l20 22M1027 594l20 22M1031 594l19 22M1035 596l17 20M1040 600l14 17"/>
        </g>
        <path d="M1014 605H1066" stroke="#e0b0ff" stroke-width="2"/>
        <g stroke="#c8c8c8" stroke-width="1.200" fill="none">
          <path d="M890 408H1211M890 392V424M1211 392V424M880 419L901 398M1201 419L1222 398"/>
          <path d="M874 424V745M858 424H890M858 745H890M863 413L886 436M863 734L886 757"/>
          <path d="M1227 424V745M1211 424H1243M1211 605H1243M1211 745H1243M1215 413L1238 436M1215 595L1238 617M1215 734L1238 757"/>
          <path d="M890 762H1211M890 745V777M1050.500 745V777M1211 745V777M1039 773L1062 750M1201 773L1222 750"/>
        </g>
        <g class="dim white">
          <text x="971" y="407" textLength="161" lengthAdjust="spacingAndGlyphs">400</text>
          <text x="718" y="621" textLength="160" lengthAdjust="spacingAndGlyphs">400</text>
        </g>
        <g class="dim green">
          <text x="1221" y="551" textLength="161" lengthAdjust="spacingAndGlyphs">225</text>
          <text x="1222" y="711" textLength="153" lengthAdjust="spacingAndGlyphs">175</text>
          <text x="891" y="834" textLength="320" lengthAdjust="spacingAndGlyphs">200200</text>
        </g>
        <path d="M1592 300L1375 479L1377 489L1359 492L1364 475L1371 475Z" fill="#f5231a"/>
        <path d="M605 581L622 587L625 592V651L622 654L605 658Z" fill="#565656"/>
        <path d="M619 614l-5 5 5 5" fill="none" stroke="#999" stroke-width="1.300"/>
        <path d="M667 936V915" stroke="#00e000" stroke-width="5"/>
        <path d="M667 905l-6 16h12z" fill="#00d800"/>
        <path d="M672 942H692" stroke="#f00" stroke-width="5"/>
        <path d="M705 942l-15-7v14z" fill="#f00"/>
        <ellipse cx="667" cy="942" rx="6.500" ry="7" fill="#0000b0"/>
        <text class="axl ly" x="667" y="902">Y</text>
        <text class="axl lx" x="712" y="949">X</text>
        <path d="M1051 974l10 4.500 5 10.500-5 10.500-10 4.500-10-4.500-5-10.500 5-10.500z" fill="none" stroke="#0a6a0a" stroke-width="1.300"/>
        <text class="axno" x="1051" y="996">4</text>
        <text class="clockt" x="1765" y="966" textLength="100" lengthAdjust="spacingAndGlyphs">1:05</text>
      </svg>
      <div class="dimedit"><span>225</span></div>
      <div class="floatbar">
        <svg class="fb" viewBox="0 0 26 26"><path d="M2 8l6-6h16v17l-6 6H2z" fill="#cfe2f8" stroke="#4a8fe8" stroke-width="1.500"/><path d="M2 8h16v17M18 8l6-6" fill="none" stroke="#4a8fe8" stroke-width="1.500"/></svg>
        <i class="car"></i>
        <svg class="fb" viewBox="0 0 26 26"><path d="M1 8V1h7M18 1h7v7M25 18v7h-7M8 25H1v-7" fill="none" stroke="#666" stroke-width="1.400"/></svg>
        <svg class="fb" viewBox="0 0 26 26"><rect x="1" y="1" width="24" height="24" rx="3" fill="none" stroke="#666" stroke-dasharray="2 2"/><path d="M13 5l7 4v8l-7 4-7-4V9zM6 9l7 4 7-4M13 13v8" fill="none" stroke="#4a8fe8" stroke-width="1.400"/></svg>
        <hr class="fbsep">
        <svg class="fb" viewBox="0 0 26 26"><path d="M14 25H1V1h24v14" fill="none" stroke="#666" stroke-width="1.300"/><path d="M5 7h16M5 11h10M5 15h6M5 19h4" stroke="#666"/><ellipse cx="20" cy="20" rx="6" ry="4" fill="#fff" stroke="#4a8fe8" stroke-width="1.300"/><circle cx="20" cy="20" r="1.800" fill="#4a8fe8"/></svg>
      </div>
    </div>
  </main>

  <footer class="status">
    <span class="sv s1">层高：</span><span class="sv s1v">3</span>
    <span class="sv s2">标高：</span><span class="sv s2v">2.95~5.95</span>
    <span class="sv s3">选中图元：</span><span class="sv s3v">0</span>
    <span class="sv s4">隐藏图元：</span><span class="sv s4v">0</span>
    <div class="stbtns">
      <span class="stb w30"><svg class="sti"><use href="#st1"/></svg></span>
      <span class="stb w45 act"><svg class="sti"><use href="#st2"/></svg><i class="car"></i></span>
      <span class="stb w30 mleft"><svg class="sti"><use href="#st3"/></svg></span>
      <span class="stb w44 mleft"><svg class="sti"><use href="#st4"/></svg><i class="car"></i></span>
      <span class="stb w44"><svg class="sti"><use href="#st5"/></svg><i class="car"></i></span>
      <span class="stb w30"><svg class="sti"><use href="#st6"/></svg></span>
      <span class="stb w30 mleft"><svg class="sti"><use href="#st7"/></svg></span>
    </div>
    <svg class="hinti" viewBox="0 0 20 20"><path d="M1 19L19 1M11 1h8v8M1 11v8h8" fill="none" stroke="#444" stroke-width="1.400"/></svg>
    <span class="hint">按鼠标左键选择要修改的绿色标注，按鼠标右键或 ESC 取消</span>
    <div class="stright">
      <svg class="sicon" viewBox="0 0 18 18"><circle cx="9" cy="9" r="9" fill="#f7932e"/><path d="M9 4v6" stroke="#fff" stroke-width="2"/><circle cx="9" cy="13" r="1.200" fill="#fff"/></svg>
      <span class="legal">合法性检查存在问题，请点击查看</span>
      <svg class="sicon" viewBox="0 0 18 18"><circle cx="9" cy="9" r="9" fill="#6dbb10"/><path d="M5 9l3 3 5-6" fill="none" stroke="#fff" stroke-width="1.600"/></svg>
      <span>实时计算已完成</span>
    </div>
  </footer>
  <div class="taskstrip"><i class="ts-a"></i><i class="ts-b"></i><i class="ts-a grow"></i></div>

  <div class="tooltip">
    <h4>查改标注</h4>
    <p>检查与修改单个图元与轴网交点的距离</p>
    <hr>
    <p class="strong">适用构件：柱、型钢砼柱、柱帽、空心楼盖柱帽、柱墩、桩承台</p>
  </div>
  <div class="redbox"></div>
</div>
</body>
</html>
```
FILE: styles.css
```css
*{box-sizing:border-box}
html,body{margin:0;height:100%;overflow:hidden}
body{font-family:"Noto Sans CJK SC","Liberation Sans",sans-serif;font-size:15px;color:#333;background:#fff}
.defs{position:absolute}
svg{--s:#666;--a:#3b82e6;display:block}
.app{position:relative;width:1920px;height:1045px;display:flex;flex-direction:column;overflow:hidden}
.car{display:inline-block;width:0;height:0;border-left:3.5px solid transparent;border-right:3.5px solid transparent;border-top:4px solid #777;flex:none;margin-left:6px}
.car.light{border-top-color:#bbb}
.car.gc{border-left-width:5px;border-right-width:5px;border-top-width:5px;margin-left:7px;border-top-color:#888}

.titlebar{height:33px;display:flex;align-items:center;flex:none}
.qat{display:flex;align-items:center;width:620px;padding-left:5px}
.logo{width:22px;height:22px;margin-right:27px}
.qi{width:20px;height:20px;margin-right:22.500px;flex:none}
.qsplit{display:flex;align-items:center;width:45px;flex:none;margin-left:-3px}
.qsplit .qi{margin-right:0}
.qmore{display:flex;flex-direction:column;gap:2px;align-items:center;margin-left:-3px}
.qmore .bar{width:7px;height:1.500px;background:#777}
.qmore .car{margin:0}
.wintitle{margin-left:95px;font-size:15.800px;white-space:nowrap;color:#444;padding-bottom:3px}
.winctl{margin-left:auto;display:flex;gap:32px;padding-right:17px}
.wc{width:13px;height:13px}

.tabs{height:37px;display:flex;align-items:center;padding-left:28px;gap:32.800px;flex:none;font-size:16px;border-bottom:1px solid #eee;position:relative}
.tab{height:37px;line-height:42px;position:relative;white-space:nowrap}
.tab.igms{letter-spacing:.6px;margin-left:1px}
.tab.on{color:#1e7ae6}
.tab.on::after{content:"";position:absolute;left:-4px;right:-4px;bottom:-1px;height:2.500px;background:#1e7ae6}
.tabright{margin-left:auto;display:flex;align-items:center;height:100%;padding-top:4px}
.finder{width:400px;height:21px;border:1px solid #e8e8e8;border-radius:2px;font-size:15px;color:#999;display:flex;align-items:center;justify-content:space-between;padding:0 5px}
.mag{width:14px;height:14px;flex:none}
.user{display:flex;align-items:center;margin-left:8px;font-size:15.200px;width:134px;white-space:nowrap}
.avatar{width:20px;height:24px;flex:none}
.ti{width:19px;height:19px;flex:none;margin-right:11px}
.help{width:30px;font-size:19px;display:flex;align-items:center;color:#555}
.help .car{margin-left:2px;border-width:3px 2.500px 0}
.tabright .ti:last-child{margin-right:7px}

.ribbon{height:125px;display:flex;flex:none;box-shadow:0 1px 0 #e4e4e4}
.grp{display:flex;flex-direction:column;margin:3px 0 5px;border-right:1px solid #ddd;flex:none}
.cols{display:grid;height:93px}
.glabel{height:24px;display:flex;align-items:center;justify-content:center;font-size:15px;padding-top:2px}
.g1{width:291px}.g1 .cols{padding-left:20px;grid-template-columns:49px 123px 1fr}
.g1 .glabel{padding-left:6px}
.g2{width:253px}.g2 .cols{padding-left:13px;grid-template-columns:98px 1fr}
.g3{width:345px}.g3 .cols{padding-left:13px;grid-template-columns:84px 140px 1fr}
.g4{width:297px}.g4 .cols{padding-left:14px;grid-template-columns:67px 68px 78px 1fr}
.g5{width:86px}.g5 .cols{padding-left:11px;grid-template-columns:41px 1fr}
.g6{width:363px}.g6 .cols{padding-left:13px;grid-template-columns:113px 123px 1fr}
.g7{width:98px}.g7 .glabel{padding-left:8px}
.g8{width:157px}.g8 .cols{padding-left:13px}
.col{display:flex;flex-direction:column}
.ri{display:flex;align-items:center;height:30.200px;gap:5px;white-space:nowrap;flex:none}
.ri.off{color:#bdbdbd;--s:#c8c8c8;--a:#c8c8c8}
.ri.off svg{--s:#c8c8c8;--a:#c8c8c8}
.ic{width:19px;height:19px;flex:none}
.ic.extra{margin-left:10px}
.ri .car{margin-left:3px}
.hot{background:#dbeafb;border-radius:3px;height:27px;margin:2px 0 0 -5px;padding-left:5px;width:107px}
.big{display:flex;flex-direction:column;align-items:center}
.bigsel{width:30px}
.bigarrow{width:27px;height:33px;margin:6px 0 12px}
.smart{width:100%;padding-right:26px;padding-left:10px}
.bigsmart{width:38px;height:38px;margin:4px 0 8px}
.smart .car{margin:9px 0 0}

.selbar{height:39px;background:#f0f0f0;display:flex;flex:none;margin-top:1px}
.sel{width:125px;border-right:1px solid #e2e2e2;display:flex;align-items:center;justify-content:space-between;padding:0 7px 2px 3px}
.sel .car{border-top-color:#555}

.work{height:770px;display:flex;flex:none;position:relative;background:#fff}
.navpane{width:250px;flex:none;border-right:1px solid #ddd;border-bottom:1px solid #ddd;position:relative;height:768px;background:#fff}
.phead{height:36px;background:#f0f0f0;display:flex;align-items:center;position:relative}
.phead.short{height:37px}
.grip{width:8px;height:16px;margin-left:9px;flex:none}
.ptitle{margin-left:15px}
.pclose{width:12px;height:12px;position:absolute;right:12px;top:12px}
.navlist{width:234px;background:#f5f7fa;height:731px}
.nv{height:52.500px;display:flex;align-items:center;padding-left:15px;position:relative}
.nv>span{margin-left:17px}
.nv.active{background:#ecedf0;color:#3a7fd5}
.nvi{width:30px;height:36px;flex:none}
.subs{background:#fff;padding:0;height:140px}
.sub{height:35.200px;line-height:34px;padding-left:27px;white-space:nowrap}
.sub.on{color:#1e7ae6}
.nlock{width:12px;height:14px;margin-left:11px}
.badge{position:absolute;right:0;top:10px;width:69px;height:24px;line-height:24px;background:#f5ca80;border-radius:12px 0 0 12px;font-weight:400;font-size:14px;text-align:right;color:#8a5a10;padding-right:3px}
.navthumb{position:absolute;left:239px;top:122px;width:5px;height:490px;background:#eee;border-radius:3px}

.midcol{width:344px;margin-left:5px;flex:none;display:flex;flex-direction:column}
.panel{border:1px solid #ddd;border-top:0;background:#fff;overflow:hidden}
.plist{height:395px}
.pprop{height:331px;margin-top:5px}
.ptab{height:36px;line-height:36px;width:85px;text-align:center;display:block}
.phead .grip+.ptab{margin-left:12px}
.short .ptab{height:35px}
.ptab.on{background:#fff;color:#2f86e6}
.tools{display:flex;height:32px;margin:9px 0 0 12px}
.tb{width:40px;height:32px;background:#f6f6f6;border-radius:3px;margin-right:11px;display:flex;align-items:center;justify-content:center;flex:none}
.tb.first{margin-right:1px}
.tb.drop{width:16px;margin-right:11px}
.tb.drop .car{margin:0}
.tb.more{width:32px;margin:0 0 0 13px;border:1px solid #e4e4e4;font-size:10px;letter-spacing:-1px;color:#555}
.tbi{width:20px;height:20px}
.psearch{height:31px;margin:10px 11px 0 10px;background:#f5f5f5;border-radius:16px;display:flex;align-items:center;justify-content:space-between;padding:0 12px 0 14px;color:#888}
.tree{margin-top:12px;padding-left:11px}
.tnode{height:30px;display:flex;align-items:center;padding-bottom:3px}
.tnode .car{margin:0 3px 0 0}
.tleaf{height:30px;line-height:30px;padding-left:20px;white-space:pre;word-spacing:4px;letter-spacing:.5px}
.sel-leaf{background:none;position:relative;z-index:0}
.sel-leaf::before{content:"";position:absolute;z-index:-1;left:15px;top:2px;width:94px;height:26px;background:#bfd7f0;border-radius:3px}

.ptable{position:relative;height:294px;overflow:hidden}
.thead{display:grid;grid-template-columns:124px 150px 52px;height:29px;margin-left:1px;width:326px;background:#eeeeee;align-items:center;text-align:center;border-bottom:1px solid #ddd;margin-top:1px}
.thead span{border-right:1px solid #ddd;height:29px;line-height:28px}
.tsec{height:31px;width:326px;background:#f0f0f0;display:flex;align-items:center;padding-left:11px;margin-left:1px}
.tsec .car{margin:0 8px 0 0}
.trow{height:31.330px;display:flex;align-items:center;position:relative;padding-left:19px}
.trow:nth-child(3){margin-top:.5px}
.trow label{width:107px;color:#2f72e8;white-space:nowrap;overflow:hidden}
.val{width:149px;height:26px;border:1px solid #ddd;line-height:24px;padding-left:3px;white-space:nowrap;margin-left:1px}
.val sup{font-size:12px;line-height:0;vertical-align:5px}
.dot{position:absolute;left:296px;top:10px;width:10px;height:10px;border-radius:50%;background:#d4d4d4;border:1px solid #bbb}
.pthumb{position:absolute;left:335px;top:17px;width:5px;height:69px;background:#eee;border-radius:3px}
.pfoot{padding:4px 0 0 8px}
.secbtn{width:99px;height:29px;border:1px solid #ccc;border-radius:4px;background:#fff;font:inherit;color:#333;padding:0}

.canvas{position:absolute;left:605px;top:0;width:1315px;height:769px;background:#000;overflow:hidden}
.draw{width:1315px;height:769px}
.dim text{font-family:"Liberation Sans",sans-serif;font-size:100px}
.dim.white text{fill:#fff}
.dim.green text{fill:#2a9a4a}
.axl{font-family:"Liberation Sans",sans-serif;font-size:19px;text-anchor:middle}
.ly{fill:#00d800}.lx{fill:#f00}
.axno{font-family:"Liberation Sans",sans-serif;font-size:20px;fill:#fff;text-anchor:middle}
.clockt{font-family:"Liberation Mono",monospace;font-size:95px;font-weight:700;fill:#005d8f}
.dimedit{position:absolute;left:656px;top:291px;width:80px;height:25px;background:#fff;border:1px solid #7da2ce;padding:2px}
.dimedit span{display:block;width:27px;height:19px;background:#0a78d7;color:#fff;font:14px/19px "Liberation Sans",sans-serif}
.floatbar{position:absolute;left:1274px;top:105px;width:41px;height:202px;background:#fff;border-radius:0 0 0 4px;display:flex;flex-direction:column;align-items:center;padding-top:32px;padding-right:2px}
.fb{width:26px;height:26px;flex:none}
.floatbar .car{margin:10px 0 7px;border-top-color:#666;border-width:5px 5px 0}
.floatbar .fb:nth-of-type(2){margin-bottom:11px}
.fbsep{width:30px;border:0;border-top:1px solid #bbb;margin:9px 0 8px}

.status{height:37px;display:flex;align-items:center;position:relative;flex:none;background:#fbfbfb;padding-bottom:2px}
.sv{position:absolute;top:6px;white-space:nowrap}
.s1{left:3px}.s1v{left:53px}.s2{left:115px}.s2v{left:165px}.s3{left:290px}.s3v{left:365px}.s4{left:428px}.s4v{left:503px}
.stbtns{margin-left:566px;display:flex;gap:4px;align-items:center}
.stb{height:30px;border:1px solid #aaa;border-radius:4px;display:flex;align-items:center;justify-content:center;gap:3px;background:#fff;flex:none}
.stb .car{margin:0;border-top-color:#444}
.w30{width:30px}.w45{width:45px}.w44{width:44px}
.mleft{margin-left:4px}
.stb.act{background:#dbeafb;border-color:#6aa6ea}
.sti{width:20px;height:20px}
.hinti{width:19px;height:19px;margin-left:20px;flex:none}
.hint{margin-left:5px;white-space:nowrap;font-size:15.200px}
.stright{margin-left:auto;display:flex;align-items:center;padding-right:14px}
.sicon{width:18px;height:18px;flex:none;margin-right:7px}
.legal{margin-right:16px}
.taskstrip{flex:1;display:flex;background:#1c2020}
.ts-a{width:45px;background:#0c0c0c}
.ts-b{width:323px;background:#c4c4c4}
.ts-a.grow{flex:1;background:#141616}

.tooltip{position:absolute;left:1686px;top:195px;width:227px;height:167px;background:#fff;border:1px solid #ddd;border-radius:3px;padding:5px 5px 0 8px;box-shadow:0 1px 3px rgba(0,0,0,.25);line-height:22px}
.tooltip h4{margin:0 0 4px;font-size:15px;font-weight:500;line-height:22px}
.tooltip p{margin:0;color:#555}
.tooltip hr{border:0;border-top:1px solid #bbb;margin:7px 0 9px}
.tooltip p.strong{color:#333;font-weight:500}
.redbox{position:absolute;left:1608px;top:113px;width:309px;height:258px;border:3.500px solid #fb1f12;border-radius:3px;pointer-events:none}
```
